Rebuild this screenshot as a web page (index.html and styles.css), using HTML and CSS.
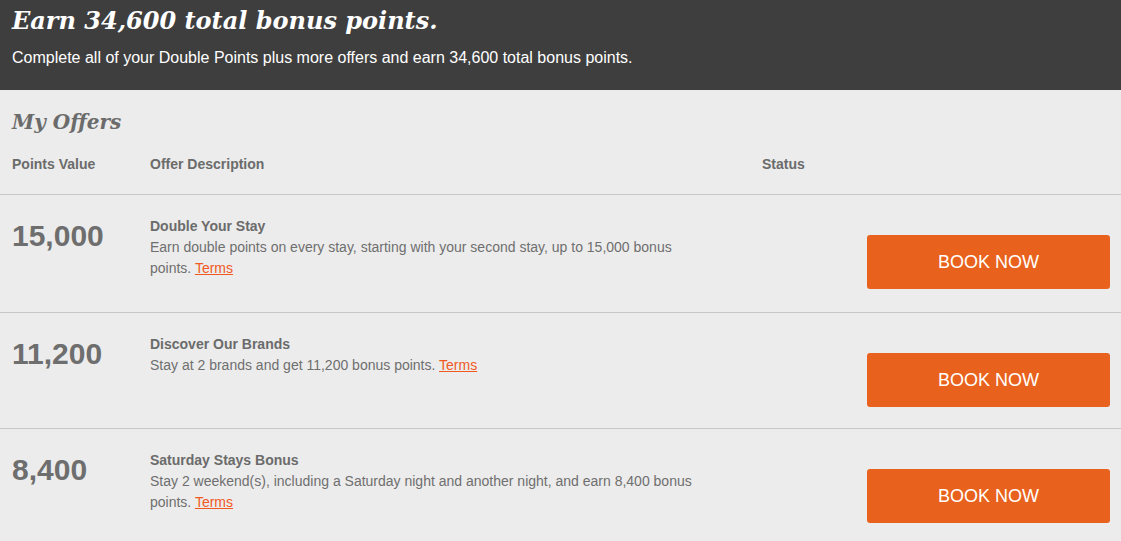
FILE: index.html
```html
<!DOCTYPE html>
<html lang="en">
<head>
	<meta charset="UTF-8">
	<title>My Offers</title>
	<link rel="stylesheet" href="styles.css">
</head>
<body>
	<div class="banner">
		<h1>Earn 34,600 total bonus points.</h1>
		<p>Complete all of your Double Points plus more offers and earn 34,600 total bonus points.</p>
	</div>
	<div class="offers">
		<h2>My Offers</h2>
		<div class="row head">
			<div class="col-points">Points Value</div>
			<div class="col-desc">Offer Description</div>
			<div class="col-status">Status</div>
		</div>
		<div class="row offer first">
			<div class="col-points num">15,000</div>
			<div class="col-desc">
				<div class="title">Double Your Stay</div>
				<div class="text">Earn double points on every stay, starting with your second stay, up to 15,000 bonus points. <a href="#">Terms</a></div>
			</div>
			<div class="col-status"></div>
			<a class="btn" href="#">BOOK NOW</a>
		</div>
		<div class="row offer short">
			<div class="col-points num">11,200</div>
			<div class="col-desc">
				<div class="title">Discover Our Brands</div>
				<div class="text">Stay at 2 brands and get 11,200 bonus points. <a href="#">Terms</a></div>
			</div>
			<div class="col-status"></div>
			<a class="btn" href="#">BOOK NOW</a>
		</div>
		<div class="row offer">
			<div class="col-points num">8,400</div>
			<div class="col-desc">
				<div class="title">Saturday Stays Bonus</div>
				<div class="text">Stay 2 weekend(s), including a Saturday night and another night, and earn 8,400 bonus points. <a href="#">Terms</a></div>
			</div>
			<div class="col-status"></div>
			<a class="btn" href="#">BOOK NOW</a>
		</div>
	</div>
</body>
</html>
```

FILE: styles.css
```css
body {
	margin: 0;
	background: #ececec;
	font-family: "Liberation Sans", Arial, sans-serif;
	color: #6b6b6b;
}
.banner {
	background: #3e3e3e;
	color: #fff;
	padding: 6px 12px 0;
	height: 84px;
}
.banner h1 {
	margin: 0;
	font-family: "DejaVu Serif", Georgia, serif;
	font-style: italic;
	font-weight: bold;
	font-size: 24px;
	line-height: 30px;
}
.banner p {
	margin: 13px 0 0;
	font-size: 16px;
}
.offers h2 {
	margin: 0;
	padding: 18px 12px 0;
	font-family: "DejaVu Serif", Georgia, serif;
	font-style: italic;
	font-weight: bold;
	font-size: 20px;
	line-height: 28px;
	color: #6b6b6b;
}
.row {
	display: flex;
	align-items: flex-start;
	padding: 0 11px 0 12px;
}
.head {
	font-size: 14px;
	font-weight: bold;
	padding-top: 20px;
	height: 38px;
	border-bottom: 1px solid #c6c6c6;
}
.col-points {
	width: 138px;
	flex: none;
}
.col-desc {
	width: 552px;
	flex: none;
}
.col-status {
	flex: 1;
	padding-left: 60px;
}
.offer {
	padding-top: 24px;
	height: 92px;
	border-bottom: 1px solid #c6c6c6;
}
.offer.first {
	height: 93px;
}
.offer.short {
	height: 91px;
}
.offer .col-desc {
	margin-top: -2px;
}
.num {
	font-size: 30px;
	font-weight: bold;
	line-height: 34px;
	color: #6e6e6e;
}
.title {
	font-size: 14px;
	font-weight: bold;
	line-height: 18px;
	margin-bottom: 2px;
}
.text {
	font-size: 14px;
	line-height: 21px;
	color: #6f6f6f;
}
.text a {
	color: #f0591f;
}
.btn {
	flex: none;
	width: 243px;
	height: 54px;
	margin-top: 16px;
	background: #e9621d;
	border-radius: 3px;
	color: #fff;
	text-decoration: none;
	font-size: 18px;
	display: flex;
	align-items: center;
	justify-content: center;
}
```
